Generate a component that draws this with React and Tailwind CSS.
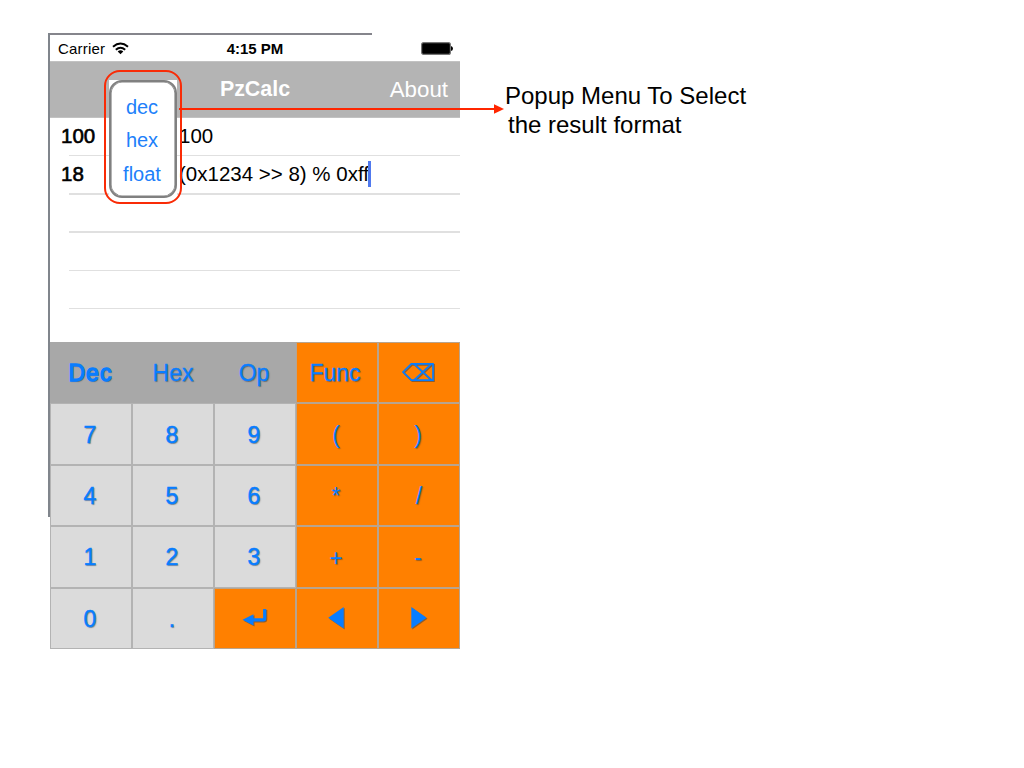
import React from "react";

const SHADOW = "[text-shadow:1px_1px_1px_rgba(60,60,60,0.5)]";

function Backspace() {
  return (
    <svg width="34" height="22" viewBox="0 0 34 22" fill="none" stroke="#087dff" strokeWidth="1.7" className="-translate-x-px -translate-y-[2px] drop-shadow-[1px_1px_0.5px_rgba(70,70,70,0.6)]">
      <path d="M2 11 10.3 2.8H32V19.2H10.3ZM13 2.8 30.5 19.2M13 19.2 30.5 2.8" />
    </svg>
  );
}

function Return() {
  return (
    <svg width="26" height="22" viewBox="0 0 26 22" className="drop-shadow-[1px_1px_0.5px_rgba(70,70,70,0.6)]">
      <path d="M22.7 1V10.2Q22.7 11.8 21.1 11.8H9" fill="none" stroke="#087dff" strokeWidth="3.2" />
      <path d="M0.5 11.8 11.5 6.2V17.6Z" fill="#087dff" />
    </svg>
  );
}

function Triangle({ right }) {
  return (
    <svg width="16" height="22" viewBox="0 0 16 22" className={`-translate-y-px drop-shadow-[1px_1px_0.5px_rgba(70,70,70,0.6)] ${right ? "" : "-translate-x-px"}`}>
      <path d={right ? "M0.3 0V21.5L15.6 10.8Z" : "M15.7 0V21.5L0.2 10.8Z"} fill="#087dff" />
    </svg>
  );
}

const G = "bg-[#a8a8a8] border-[#a8a8a8]";
const L = "bg-[#dbdbdb] border-[#b3b3b3]";
const O = "bg-[#ff8000] border-[#b8a48e]";
const D = "[-webkit-text-stroke:0.5px_#087dff] -translate-x-px";

const keys = [
  { t: "Dec", c: G, s: "[-webkit-text-stroke:1.4px_#087dff] tracking-[1.1px] -translate-x-[0.5px]" },
  { t: "Hex", c: G, s: "[-webkit-text-stroke:0.3px_#087dff]" },
  { t: "Op", c: G, s: "[-webkit-text-stroke:0.3px_#087dff] -translate-x-px" },
  { t: "Func", c: O, s: "[-webkit-text-stroke:0.3px_#087dff] -translate-x-[2px]" },
  { i: <Backspace />, c: O },
  { t: "7", c: L, s: D }, { t: "8", c: L, s: D }, { t: "9", c: L, s: D }, { t: "(", c: O, s: "-translate-x-px" }, { t: ")", c: O, s: "-translate-x-px" },
  { t: "4", c: L, s: D }, { t: "5", c: L, s: D }, { t: "6", c: L, s: D }, { t: "*", c: O, s: "-translate-x-px" }, { t: "/", c: O },
  { t: "1", c: L, s: D }, { t: "2", c: L, s: D }, { t: "3", c: L, s: D }, { t: "+", c: O, s: "translate-y-px -translate-x-px" }, { t: "-", c: O, s: "-translate-x-px" },
  { t: "0", c: L, s: D }, { t: ".", c: L, s: D },
  { i: <Return />, c: O }, { i: <Triangle />, c: O }, { i: <Triangle right />, c: O },
];

function Row({ result, expr, caret }) {
  return (
    <div className="relative flex h-[38.3px] items-center pb-[2px] pl-[11px] text-[20.5px] leading-none text-black">
      <span className="w-[118px] [-webkit-text-stroke:0.6px_black]">{result}</span>
      <span className="whitespace-pre">{expr}</span>
      {caret && <span className="-ml-[0.5px] h-[26px] w-[2.5px] bg-[#5079ee]" />}
      <div className="absolute bottom-0 left-[19px] right-0 h-[1.5px] bg-[#e0e0e0]" />
    </div>
  );
}

export default function App() {
  return (
    <main className="relative h-[768px] w-[1024px] overflow-hidden bg-white pl-[50px] pt-[35px] font-['Liberation_Sans',Arial,sans-serif]">
      <section className="flex w-[410px] flex-col">
        <header className="grid h-[26px] grid-cols-3 items-center text-[15px] leading-none text-black">
          <div className="flex items-center gap-[7px] pl-[8px]">
            <span className="tracking-[0.2px]">Carrier</span>
            <svg width="17" height="13" viewBox="0 0 17 13" fill="none" stroke="#000" strokeWidth="2">
              <path d="M1 4.7Q8.5-1.7 16 4.7M3.8 7.7Q8.5 3.8 13.2 7.7" />
              <path d="M5.7 9.4Q8.5 7.2 11.3 9.4L8.5 12.2Z" fill="#000" stroke="none" />
            </svg>
          </div>
          <span className="text-center text-[15px] font-bold">4:15 PM</span>
          <div className="flex justify-end pr-[7px]">
            <svg width="32" height="13" viewBox="0 0 32 13">
              <rect x="0.6" y="0.6" width="28.8" height="11.8" rx="2" fill="#000" stroke="#777" strokeWidth="1.2" />
              <path d="M30 4Q32 4.5 32 6.5T30 9Z" fill="#000" />
            </svg>
          </div>
        </header>
        <nav className="grid h-[57px] grid-cols-3 items-center border-y border-[#c2c2c2] bg-[#b4b4b4] pt-px leading-none text-white">
          <span />
          <span className="text-center text-[21.4px] font-bold">PzCalc</span>
          <span className="pr-[12px] text-right text-[22.3px]">About</span>
        </nav>
        <div className="flex h-[224px] flex-col">
          <Row result="100" expr="100" />
          <Row result="18" expr="(0x1234 >> 8) % 0xff" caret />
          <Row />
          <Row />
          <Row />
        </div>
        <div className="grid grid-cols-[repeat(5,82px)] grid-rows-[repeat(5,61.4px)]">
          {keys.map((k, i) => (
            <button key={i} className={`flex items-center justify-center border pt-[2px] text-[23px] leading-none text-[#087dff] ${k.c} ${SHADOW}`}>
              {k.i || <span className={k.s || ""}>{k.t}</span>}
            </button>
          ))}
        </div>
      </section>

      <div className="absolute left-[48px] top-[33px] h-[2px] w-[324px] bg-[#85858c]" />
      <div className="absolute left-[48px] top-[33px] h-[484px] w-[2px] bg-[#80858c]" />

      <div className="absolute left-[109px] top-[80px] h-[118px] w-[68px] bg-white">
        <div className="flex h-full flex-col items-center rounded-[13px] border-2 border-[#808080] bg-white pr-[2px] pt-[9px] text-[20px] leading-[33.3px] text-[#2080fa] [box-shadow:inset_0_0_0_0.6px_#808080]">
          <span>dec</span>
          <span>hex</span>
          <span>float</span>
        </div>
      </div>
      <div className="absolute left-[104px] top-[70px] h-[134px] w-[78px] rounded-[16px] border-2 border-[#f92b06]" />
      <svg className="absolute left-[179px] top-[103px]" width="326" height="12" viewBox="0 0 326 12">
        <path d="M0 6H316" stroke="#ff2600" strokeWidth="2" />
        <path d="M315 1.2 325 6 315 10.8Z" fill="#ff2600" />
      </svg>
      <p className="absolute left-[505px] top-[81px] whitespace-pre text-[24px] leading-[29px] text-black">
        <span className="block">Popup Menu To Select</span>
        <span className="block pl-[3px]">the result format</span>
      </p>
    </main>
  );
}
